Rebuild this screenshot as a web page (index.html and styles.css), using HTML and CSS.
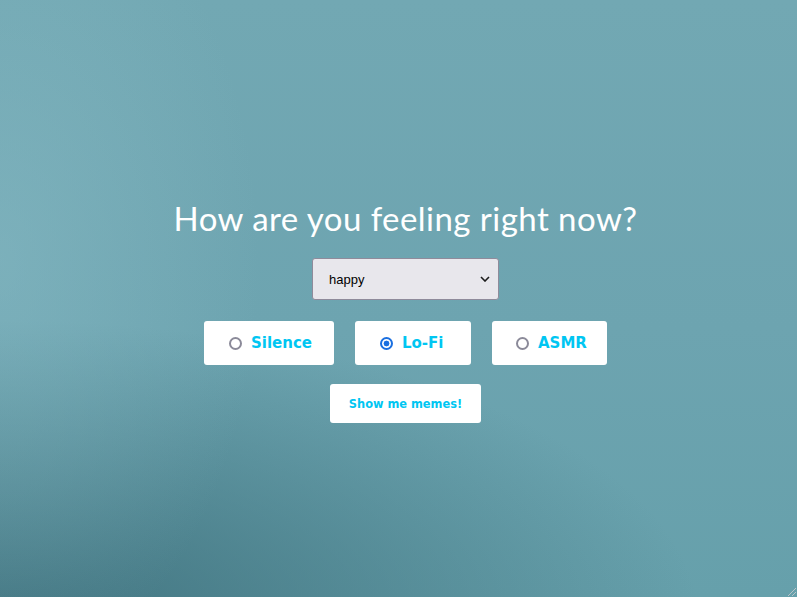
FILE: index.html
```html
<!DOCTYPE html>
<html>
<head>
<meta charset="utf-8">
<link rel="stylesheet" href="styles.css">
</head>
<body>
<main class="page">
  <h1 class="title">How are you feeling right now?</h1>
  <div class="select-wrap">
    <select class="mood">
      <option selected>happy</option>
      <option>sad</option>
      <option>angry</option>
    </select>
    <svg class="chev" width="10" height="6" viewBox="0 0 10 6"><path d="M1 1 L5 5 L9 1" fill="none" stroke="#1c1c1c" stroke-width="1.6"/></svg>
  </div>
  <div class="choices">
    <label class="choice c1"><input type="radio" name="sound"><span>Silence</span></label>
    <label class="choice c2"><input type="radio" name="sound" checked><span>Lo-Fi</span></label>
    <label class="choice c3"><input type="radio" name="sound"><span>ASMR</span></label>
  </div>
  <button class="go">Show me memes!</button>
</main>
<svg class="grip" width="12" height="12" viewBox="0 0 12 12"><path d="M11 3 L3 11 M11 7 L7 11" stroke="#b9c4c8" stroke-width="1"/></svg>
</body>
</html>
```
FILE: styles.css
```css
html, body {
  margin: 0;
  height: 100%;
}
body {
  background:
    radial-gradient(ellipse 260px 420px at 0px 260px, rgba(140, 190, 200, 0.45), rgba(140, 190, 200, 0) 100%),
    radial-gradient(ellipse 700px 300px at 0px 620px, rgba(60, 110, 122, 0.9), rgba(60, 110, 122, 0) 100%),
    linear-gradient(180deg, #72a8b3 0%, #6da4b0 55%, #66a0ab 100%);
  font-family: "DejaVu Sans", sans-serif;
  overflow: hidden;
  position: relative;
}
.page {
  display: flex;
  flex-direction: column;
  align-items: center;
  padding: 198px 0 0 14px;
}
.title {
  margin: 0;
  font-family: "Lato", sans-serif;
  font-weight: 400;
  font-size: 33px;
  line-height: 40px;
  color: #fff;
  letter-spacing: 0.45px;
}
.select-wrap {
  position: relative;
  margin-top: 20px;
}
.mood {
  display: block;
  appearance: none;
  width: 187px;
  height: 42px;
  background: #e8e7ec;
  border: 1px solid #8f8b9b;
  border-radius: 3px;
  padding: 0 8px 0 16px;
  font-family: "Liberation Sans", sans-serif;
  font-size: 13px;
  color: #000;
}
.chev {
  position: absolute;
  right: 9px;
  top: 18px;
  pointer-events: none;
}
.choices {
  display: flex;
  gap: 21px;
  margin-top: 21px;
}
.choice {
  display: flex;
  align-items: center;
  gap: 9px;
  height: 44px;
  background: #fff;
  border-radius: 3px;
  padding-left: 25px;
  box-sizing: border-box;
  font-weight: 700;
  font-size: 15px;
  color: #00c6f2;
}
.c1 { width: 130px; }
.c2 { width: 116px; }
.c3 { width: 115px; padding-left: 24px; }
.choice input {
  appearance: none;
  margin: 0;
  width: 13px;
  height: 13px;
  border: 2px solid #8b8a99;
  border-radius: 50%;
  box-sizing: border-box;
  background: #fff;
}
.choice input:checked {
  border-color: #1a6fe0;
  background: radial-gradient(circle, #1a6fe0 0 2.6px, #fff 3.2px);
}
.go {
  margin-top: 19px;
  width: 151px;
  height: 39px;
  background: #fff;
  border: none;
  border-radius: 3px;
  font-family: "DejaVu Sans", sans-serif;
  font-weight: 700;
  font-size: 11.4px;
  color: #00c6f2;
}
.grip {
  position: absolute;
  right: 0;
  bottom: 0;
}
```
